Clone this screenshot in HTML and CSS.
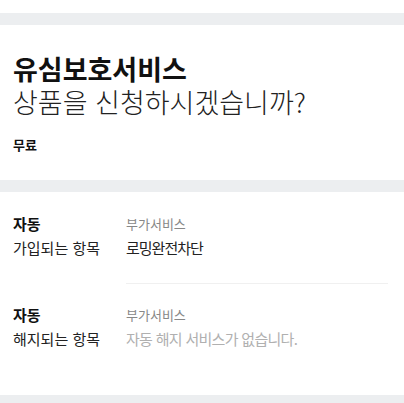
FILE: index.html
```html
<!DOCTYPE html>
<html lang="ko">
<head>
<meta charset="utf-8">
<link rel="stylesheet" href="styles.css">
</head>
<body>
<div class="top-gap"></div>
<div class="band"></div>
<section class="intro">
  <h1 class="title">유심보호서비스</h1>
  <p class="subtitle">상품을 신청하시겠습니까?</p>
  <p class="price">무료</p>
</section>
<div class="band"></div>
<section class="details">
  <div class="row">
    <div class="label"><strong>자동</strong><span>가입되는 항목</span></div>
    <div class="value"><span class="kind">부가서비스</span><span class="name">로밍완전차단</span></div>
  </div>
  <div class="row">
    <div class="label"><strong>자동</strong><span>해지되는 항목</span></div>
    <div class="value"><span class="kind">부가서비스</span><span class="name empty">자동 해지 서비스가 없습니다.</span></div>
  </div>
</section>
<div class="band"></div>
</body>
</html>
```
FILE: styles.css
```css
html, body {
  margin: 0;
  padding: 0;
  background: #fff;
  font-family: "Noto Sans CJK KR", "Noto Sans", sans-serif;
  color: #111;
}
.top-gap { height: 13px; }
.band { height: 12px; background: #eceef0; }
.intro {
  padding: 27px 13px 26px;
}
.title {
  margin: 0;
  font-size: 27px;
  line-height: 33px;
  font-weight: 700;
}
.subtitle {
  margin: 0;
  font-size: 27px;
  line-height: 33px;
  font-weight: 300;
  color: #222;
}
.price {
  margin: 18px 0 0;
  font-size: 13px;
  line-height: 18px;
  font-weight: 700;
}
.details {
  padding: 20px 16px 44px 13px;
}
.row {
  display: grid;
  grid-template-columns: 113px 1fr;
}
.row:first-child .label,
.row:first-child .value { padding-bottom: 23px; }
.row + .row .label { padding-top: 20px; }
.row + .row .value { padding-top: 19px; border-top: 1px solid #f0f0f0; }
.label, .value {
  display: flex;
  flex-direction: column;
}
.label strong {
  font-size: 15px;
  line-height: 24px;
  font-weight: 700;
}
.label span {
  font-size: 15px;
  line-height: 24px;
  color: #222;
}
.kind {
  font-size: 13px;
  line-height: 24px;
  color: #888;
}
.name {
  font-size: 15px;
  line-height: 24px;
  letter-spacing: -1px;
  color: #222;
}
.name.empty { color: #b0b0b0; letter-spacing: -0.7px; }
```
